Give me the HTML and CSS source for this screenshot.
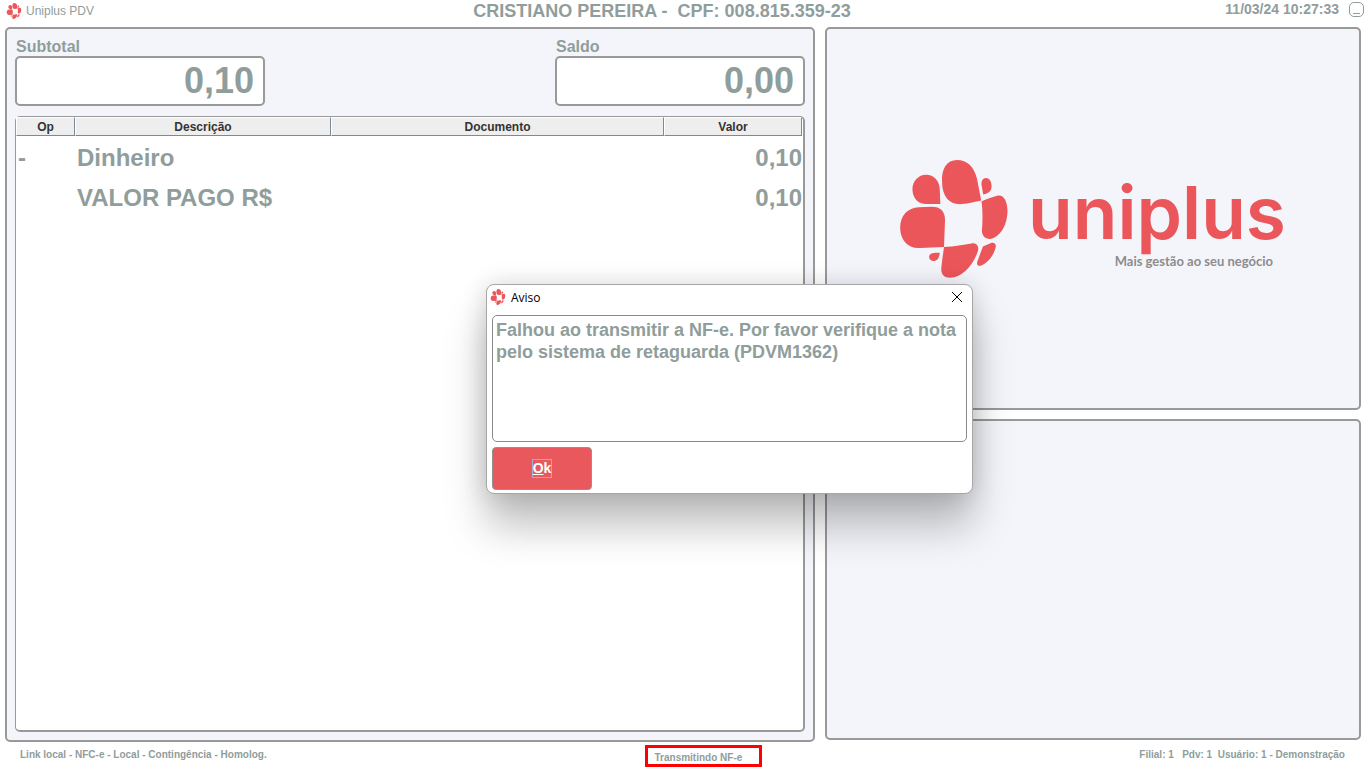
FILE: index.html
```html
<!DOCTYPE html>
<html lang="pt-BR">
<head>
  <meta charset="utf-8">
  <title>Uniplus PDV</title>
  <link rel="stylesheet" href="styles.css">
</head>
<body>
  <svg class="sprite" aria-hidden="true">
    <symbol id="flower" viewBox="30 27 324 355">
      <path d="M151 159H105C83 159 67 140 67 115C67 90 85 71 108 71C131 71 148 89 149 113Z"/>
      <path d="M274 149C247 154 229 160 209 160C178 160 157 138 156 94C154 53 170 27 201 27C231 27 253 47 261 83Z"/>
      <path d="M280 131L275 104C273 90 279 81 288 81C298 81 305 91 305 106C305 119 298 127 280 131Z"/>
      <path d="M275 151C293 145 307 138 324 134C341 131 353 150 353 181C352 218 337 249 311 262C293 270 276 259 276 240C278 215 279 184 275 151Z"/>
      <path d="M162 289L89 292C53 294 30 267 30 231C30 194 53 170 86 169L126 168C151 168 165 182 165 207Z"/>
      <path d="M162 289C195 287 220 282 245 278C261 276 269 288 263 304C247 349 214 381 181 381C160 381 152 369 154 350C156 327 160 306 162 289Z"/>
      <path d="M279 287L305 276C315 274 320 281 317 291C310 318 292 338 272 345C263 347 260 341 262 333Z"/>
      <path d="M149 306C148 322 141 331 131 331C122 331 117 325 117 318C118 308 127 305 149 306Z"/>
    </symbol>
  </svg>

  <header class="titlebar">
    <div class="app-name">
      <svg class="icon"><use href="#flower"/></svg>
      <span>Uniplus PDV</span>
    </div>
    <h1 class="customer">CRISTIANO PEREIRA -  CPF: 008.815.359-23</h1>
    <div class="clock">
      <time>11/03/24 10:27:33</time>
      <button class="minimize" type="button" aria-label="Minimizar"></button>
    </div>
  </header>

  <main class="workspace">
    <section class="panel payment">
      <div class="totals">
        <div class="total">
          <label for="subtotal">Subtotal</label>
          <input type="text" id="subtotal" value="0,10" readonly>
        </div>
        <div class="total">
          <label for="saldo">Saldo</label>
          <input type="text" id="saldo" value="0,00" readonly>
        </div>
      </div>

      <div class="items">
        <table>
          <colgroup>
            <col class="col-op">
            <col class="col-desc">
            <col class="col-doc">
            <col class="col-value">
          </colgroup>
          <thead>
            <tr>
              <th>Op</th>
              <th>Descrição</th>
              <th>Documento</th>
              <th>Valor</th>
            </tr>
          </thead>
          <tbody>
            <tr>
              <td>-</td>
              <td>Dinheiro</td>
              <td></td>
              <td class="value">0,10</td>
            </tr>
            <tr>
              <td></td>
              <td>VALOR PAGO R$</td>
              <td></td>
              <td class="value">0,10</td>
            </tr>
          </tbody>
        </table>
      </div>
    </section>

    <aside class="side">
      <div class="panel brand">
        <svg class="brand-mark"><use href="#flower"/></svg>
        <div class="brand-text">
          <span class="brand-name">uniplus</span>
          <span class="brand-tagline">Mais gestão ao seu negócio</span>
        </div>
      </div>
      <div class="panel"></div>
    </aside>
  </main>

  <footer class="statusbar">
    <span>Link local - NFC-e - Local - Contingência - Homolog.</span>
    <span class="sending">Transmitindo NF-e</span>
    <span>Filial: 1   Pdv: 1  Usuário: 1 - Demonstração</span>
  </footer>

  <div class="dialog" role="dialog" aria-labelledby="dialog-title">
    <div class="dialog-head">
      <svg class="icon"><use href="#flower"/></svg>
      <span id="dialog-title">Aviso</span>
      <button class="close" type="button" aria-label="Fechar">
        <svg viewBox="0 0 10 10"><path d="M0 0L10 10M10 0L0 10"/></svg>
      </button>
    </div>
    <p class="message">Falhou ao transmitir a NF-e. Por favor verifique a nota pelo sistema de retaguarda (PDVM1362)</p>
    <button class="ok" type="button"><span><u>O</u>k</span></button>
  </div>
</body>
</html>
```

FILE: styles.css
```css
* {
  box-sizing: border-box;
}

body {
  margin: 0;
  min-height: 100vh;
  display: flex;
  flex-direction: column;
  background: #fff;
  color: #8f9d9b;
  font-family: "Liberation Sans", Arial, sans-serif;
  font-weight: bold;
}

button {
  padding: 0;
  font: inherit;
}

.sprite {
  position: absolute;
  width: 0;
  height: 0;
}

.icon {
  width: 16px;
  height: 16px;
  fill: #eb565b;
}

/* top bar */
.titlebar {
  display: grid;
  grid-template-columns: 1fr auto 1fr;
  height: 27px;
  padding: 0 1px 0 6px;
}

.app-name {
  display: flex;
  gap: 4px;
  padding-top: 3px;
  font-size: 12px;
  font-weight: normal;
  line-height: 16px;
}

.customer {
  margin: 0;
  padding-right: 46px;
  font-size: 18px;
  line-height: 22px;
  white-space: pre;
}

.clock {
  display: flex;
  justify-content: flex-end;
  gap: 10px;
  font-size: 14px;
  line-height: 19px;
}

.minimize {
  display: flex;
  justify-content: center;
  align-items: flex-end;
  width: 15px;
  height: 15px;
  margin-top: 2px;
  padding-bottom: 2px;
  border: 1px solid #8f9d9b;
  border-radius: 5px;
  background: #fff;
}

.minimize::after {
  content: "";
  width: 7px;
  height: 1px;
  background: #8f9d9b;
}

/* panels */
.workspace {
  flex: 1;
  display: grid;
  grid-template-columns: 810fr 536fr;
  gap: 10px;
  padding: 0 4px 0 5px;
}

.panel {
  border: 2px solid #999;
  border-radius: 5px;
  background: #f4f5fa;
}

.payment {
  display: flex;
  flex-direction: column;
  padding: 8px;
}

.totals {
  display: flex;
  justify-content: space-between;
  margin-bottom: 10px;
}

.total {
  display: flex;
  flex-direction: column;
  width: 250px;
}

.total label {
  padding-left: 1px;
  font-size: 16px;
  line-height: 19px;
}

.total input {
  width: 100%;
  height: 50px;
  padding: 0 9px;
  border: 2px solid #999;
  border-radius: 5px;
  background: #fff;
  color: inherit;
  font: bold 36px "Liberation Sans", Arial, sans-serif;
  text-align: right;
  outline: none;
}

.items {
  flex: 1;
  padding-right: 1px;
  border: 2px solid #999;
  border-top-width: 1px;
  border-left-width: 1px;
  border-radius: 5px;
  background: #fff;
}

table {
  width: 100%;
  table-layout: fixed;
  border-collapse: separate;
  border-spacing: 0;
}

.col-op { width: 59px; }
.col-desc { width: 256px; }
.col-value { width: 138px; }

th {
  height: 19px;
  padding: 0;
  border: 1px solid #7a8a99;
  border-top-color: #fff;
  border-left-color: #fff;
  background: #eee;
  color: #333;
  font-size: 12px;
  line-height: 16px;
}

td {
  height: 40px;
  padding: 3px 0 0 2px;
  font-size: 24px;
  line-height: 37px;
}

.value {
  text-align: right;
}

.side {
  display: grid;
  grid-template-rows: 383fr 321fr;
  gap: 9px;
  padding-bottom: 2px;
}

.brand {
  display: flex;
  justify-content: center;
  align-items: center;
  gap: 20px;
  color: #eb565b;
}

.brand-mark {
  width: 108px;
  height: 118px;
  fill: #eb565b;
}

.brand-text {
  display: flex;
  flex-direction: column;
  padding-top: 4px;
}

.brand-name {
  font-family: Inter, sans-serif;
  font-size: 73px;
  font-weight: 600;
  line-height: 80px;
}

.brand-tagline {
  padding-right: 13px;
  color: #8c8c8c;
  font-family: Lato, sans-serif;
  font-size: 13px;
  line-height: 16px;
  text-align: right;
}

/* bottom bar */
.statusbar {
  display: flex;
  justify-content: space-between;
  height: 25px;
  padding: 0 20px;
  font-size: 10px;
  line-height: 26px;
  white-space: pre;
}

.sending {
  width: 117px;
  height: 22px;
  margin-top: 3px;
  padding-left: 7px;
  border: 3px solid #f00;
  line-height: 20px;
}

/* warning window */
.dialog {
  position: absolute;
  top: 284px;
  left: 486px;
  width: 487px;
  padding: 0 5px 3px;
  border: 1px solid #a6a6a6;
  border-radius: 8px;
  background: #fff;
  box-shadow: 0 32px 40px rgba(0, 0, 0, 0.25), 0 0 24px rgba(0, 0, 0, 0.15);
}

.dialog-head {
  display: flex;
  align-items: center;
  gap: 5px;
  height: 30px;
  margin-left: -2px;
  padding-bottom: 6px;
  color: #000;
  font: 12px "Open Sans", sans-serif;
}

.close {
  display: flex;
  margin-left: auto;
  margin-right: 5px;
  border: 0;
  background: none;
}

.close svg {
  width: 10px;
  height: 10px;
  stroke: #000;
  overflow: visible;
}

.message {
  height: 127px;
  margin: 0 0 5px;
  padding: 3px 0 0 3px;
  border: 1px solid #8a8a8a;
  border-radius: 5px;
  font-size: 18px;
  line-height: 22px;
}

.ok {
  display: block;
  width: 100px;
  height: 43px;
  border: 1px solid #929292;
  border-radius: 4px;
  background: #e9585c;
  color: #fff;
  font-size: 14px;
  line-height: 17px;
}

.ok span {
  display: inline-block;
  border: 1px solid #9fb4d3;
}
```
